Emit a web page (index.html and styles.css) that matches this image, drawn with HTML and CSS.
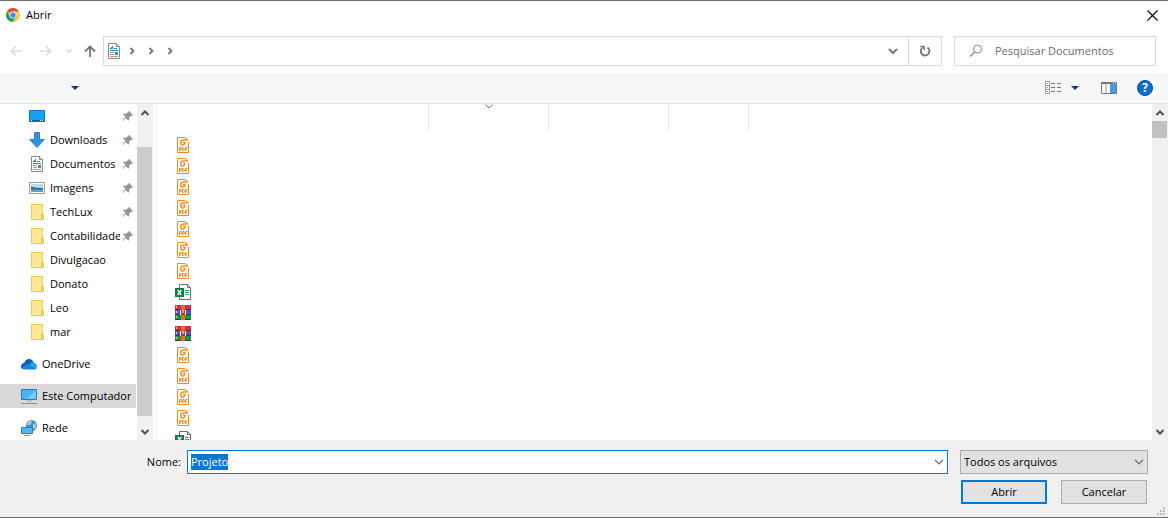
FILE: index.html
```html
<!DOCTYPE html>
<html lang="pt-BR">
<head>
    <meta charset="UTF-8">
    <meta name="viewport" content="width=device-width, initial-scale=1.0">
    <title>Abrir</title>
    <link rel="stylesheet" href="styles.css">
</head>
<body>
    <!-- Shared icons -->
    <svg class="sprite" aria-hidden="true">
        <symbol id="i-doc" viewBox="0 0 16 16">
            <path d="M2.500.5h8l3 3v12h-11z" fill="#fff" stroke="#8a8a8a"/>
            <path d="M10.500.5v3h3" fill="#ddd" stroke="#8a8a8a"/>
            <path d="M4 5.500h3M5 4.500h2M6 3.500h1M8 5.500h3M4 7.500h8" stroke="#1e88d2" fill="none"/>
            <path d="M4 9.500h4M4 11.500h4M4 13.500h8" stroke="#9aa0a5"/>
            <path d="M9 9h3v3H9z" fill="#3c8fc0"/>
        </symbol>
        <symbol id="i-folder" viewBox="0 0 16 16">
            <path d="M2.500.5h11v15h-11z" fill="#ffe794" stroke="#f0cb50"/>
            <path d="M12.500 10.500h2v5h-2z" fill="#ffe08a" stroke="#e8bd45"/>
        </symbol>
        <symbol id="i-pin" viewBox="0 0 12 12">
            <path d="M7 1l4 4-1 1-1-.2-1.800 2 .1 2-1 1-2.600-2.600L1 11l-.5-.5 3-3.400L1 4.700l1-1 2 .1 2.200-1.800L6 1.700z" fill="#8c98a3"/>
        </symbol>
        <symbol id="i-pdf" viewBox="0 0 16 16">
            <path d="M10 .5H2.500v15h11V5" fill="none" stroke="#f58a1f"/>
            <path d="M10.500 0L14 3.500h-3.500z" fill="#f58a1f"/>
            <path d="M10.500 3H8.500C6.500 3 5.700 4.600 5.700 5.800S6.500 8 7.700 8 9.800 7 10 5.500H8" fill="none" stroke="#f58a1f" stroke-width="1.400"/>
            <path d="M4.500 14v-3.500h1.700v2H4.500M7.500 10.500v3h1l.7-.7v-1.600l-.7-.7zM10.500 14v-3.500h2M10.500 12.500h1.500" fill="none" stroke="#f58a1f"/>
        </symbol>
        <symbol id="i-xls" viewBox="0 0 16 16">
            <path d="M4.500.5h8l3 3v12h-11z" fill="#fff" stroke="#6d6d6d"/>
            <path d="M12.500.5v3h3" fill="none" stroke="#6d6d6d"/>
            <path d="M10 6.500h4M10 8.500h4M10 10.500h4" stroke="#21a366"/>
            <path d="M0 4h9v9H0z" fill="#107c41"/>
            <path d="M2.700 6l3.600 5M6.300 6l-3.600 5" stroke="#fff" stroke-width="1.400"/>
        </symbol>
        <symbol id="i-rar" viewBox="0 0 16 16">
            <path d="M0 0h16v5H0z" fill="#d02c58"/>
            <path d="M0 5h16v5H0z" fill="#5a50bd"/>
            <path d="M0 10h16v5H0z" fill="#169447"/>
            <path d="M0 4.500h16M0 9.500h16M0 14.500h16" stroke="#2a2140" stroke-opacity=".7"/>
            <path d="M1.500 1v2M1.500 6v2M1.500 11v2" stroke="#f7d02c"/>
            <path d="M6 0h4v15H6z" fill="#e07020"/>
            <path d="M5 5h6v5H5z" fill="#a83e20"/>
            <path d="M5.500 5v5M10.500 5v5M8 5v3" stroke="#fff" fill="none"/>
        </symbol>
        <symbol id="i-up" viewBox="0 0 10 10">
            <path d="M1.500 7L5 3.500 8.500 7" fill="none" stroke="#505050" stroke-width="2"/>
        </symbol>
        <symbol id="i-down" viewBox="0 0 10 10">
            <path d="M1.500 3L5 6.500 8.500 3" fill="none" stroke="#505050" stroke-width="2"/>
        </symbol>
        <symbol id="i-crumb" viewBox="0 0 6 8">
            <path d="M1.500 1L4.500 4l-3 3" fill="none" stroke="#757575" stroke-width="1.800"/>
        </symbol>
        <symbol id="i-caret" viewBox="0 0 8 4">
            <path d="M0 0h8L4 4z" fill="#17365f"/>
        </symbol>
    </svg>

    <header class="titlebar">
        <svg width="14" height="14" viewBox="0 0 14 14">
            <circle cx="7" cy="7" r="7" fill="#ffcd40"/>
            <path d="M7 7L.9 3.500A7 7 0 0 1 13.100 3.500H7z" fill="#dd5144"/>
            <path d="M7 7L4 8.800.9 3.500A7 7 0 0 0 7 14l3-5.200z" fill="#1da362"/>
            <circle cx="7" cy="7" r="3.400" fill="#f1f1f1"/>
            <circle cx="7" cy="7" r="2.600" fill="#4285f4"/>
        </svg>
        <h1>Abrir</h1>
        <button type="button" class="close" aria-label="Fechar">
            <svg width="11" height="11" viewBox="0 0 11 11"><path d="M.5.5l10 10M10.500.5l-10 10" stroke="#000" stroke-width="1.100"/></svg>
        </button>
    </header>

    <div class="address-row">
        <nav class="history" aria-label="Histórico">
            <button type="button" aria-label="Voltar" disabled><svg width="12" height="12" viewBox="0 0 12 12"><path d="M12 6H1.500M6 1.500L1.500 6 6 10.500" fill="none" stroke="#dcdcdc" stroke-width="1.600"/></svg></button>
            <button type="button" aria-label="Avançar" disabled><svg width="12" height="12" viewBox="0 0 12 12"><path d="M0 6h10.500M6 1.500L10.500 6 6 10.500" fill="none" stroke="#dcdcdc" stroke-width="1.600"/></svg></button>
            <button type="button" class="recent" aria-label="Locais recentes" disabled><svg width="6" height="6" viewBox="0 0 6 6"><path d="M.5 1.500L3 4l2.500-2.500" fill="none" stroke="#d5d5d5" stroke-width="1.500"/></svg></button>
            <button type="button" class="parent" aria-label="Acima"><svg width="12" height="12" viewBox="0 0 12 12"><path d="M6 12V1.500M1 6.500l5-5 5 5" fill="none" stroke="#757575" stroke-width="1.800"/></svg></button>
        </nav>
        <div class="address">
            <svg width="16" height="16"><use href="#i-doc"/></svg>
            <button type="button" class="crumb" aria-label="Pasta 1"><svg width="6" height="8"><use href="#i-crumb"/></svg></button>
            <button type="button" class="crumb" aria-label="Pasta 2"><svg width="6" height="8"><use href="#i-crumb"/></svg></button>
            <button type="button" class="crumb" aria-label="Pasta 3"><svg width="6" height="8"><use href="#i-crumb"/></svg></button>
            <button type="button" class="previous" aria-label="Locais anteriores"><svg width="10" height="10" viewBox="0 0 10 10"><path d="M1 3l4 4 4-4" fill="none" stroke="#757575" stroke-width="2"/></svg></button>
            <button type="button" class="refresh" aria-label="Atualizar">
                <svg width="12" height="12" viewBox="0 0 12 12"><path d="M8.500 2.600A4.300 4.300 0 1 1 3 3.200" fill="none" stroke="#757575" stroke-width="1.800"/><path d="M1.500 1.600h3.500v3.500" fill="none" stroke="#757575" stroke-width="1.600"/></svg>
            </button>
        </div>
        <label class="search">
            <svg width="14" height="14" viewBox="0 0 14 14"><circle cx="8.500" cy="5" r="4" fill="none" stroke="#858585"/><path d="M5.500 8L1 12.500" stroke="#858585" stroke-width="1.200"/></svg>
            <input type="text" placeholder="Pesquisar Documentos" aria-label="Pesquisar Documentos">
        </label>
    </div>

    <div class="toolbar">
        <button type="button" class="organize" aria-label="Organizar"><svg width="8" height="4"><use href="#i-caret"/></svg></button>
        <button type="button" class="view" aria-label="Exibição">
            <svg width="17" height="14" viewBox="0 0 17 14">
                <path d="M.5.5h4v12h-4zM.5 4.500h4M.5 8.500h4" fill="#fff" stroke="#9a9a9a"/>
                <path d="M2 2.500h1M2 6.500h1" stroke="#3b87c8"/><path d="M2 10.500h1" stroke="#d33"/>
                <path d="M6 2.500h4M12 2.500h4M6 6.500h4M12 6.500h4M6 10.500h4M12 10.500h4" stroke="#777"/>
            </svg>
            <svg width="8" height="4"><use href="#i-caret"/></svg>
        </button>
        <button type="button" class="preview" aria-label="Painel de visualização">
            <svg width="16" height="12" viewBox="0 0 16 12"><path d="M.5.5h15v11H.5z" fill="#fff" stroke="#777"/><path d="M0 1h16" stroke="#777" stroke-width="2"/><path d="M5 2v9" stroke="#999"/><path d="M9 2h6v9H9z" fill="#429ce3"/><path d="M12 1h1M14 1h1" stroke="#fff"/></svg>
        </button>
        <button type="button" class="help" aria-label="Ajuda">?</button>
    </div>

    <main class="browser">
        <nav class="sidebar" aria-label="Pastas">
            <ul>
                <li class="sub">
                    <a href="#desktop" aria-label="Área de Trabalho"><svg width="16" height="16" viewBox="0 0 16 16"><path d="M.5 2.500h15v11H.5z" fill="#18a0f5" stroke="#0878c4"/><path d="M1 12.500h14" stroke="#075a9c"/><path d="M2 12.500h1M11 12.500h1M13 12.500h1" stroke="#fff"/></svg><span></span></a>
                    <svg class="pin" width="12" height="12"><use href="#i-pin"/></svg>
                </li>
                <li class="sub">
                    <a href="#downloads"><svg width="16" height="16" viewBox="0 0 16 16"><path d="M5.500.5h5v7h5L8 15.500.5 7.500h5z" fill="#3092e2" stroke="#2b83cc"/></svg><span>Downloads</span></a>
                    <svg class="pin" width="12" height="12"><use href="#i-pin"/></svg>
                </li>
                <li class="sub">
                    <a href="#documentos"><svg width="16" height="16"><use href="#i-doc"/></svg><span>Documentos</span></a>
                    <svg class="pin" width="12" height="12"><use href="#i-pin"/></svg>
                </li>
                <li class="sub">
                    <a href="#imagens"><svg width="16" height="16" viewBox="0 0 16 16"><path d="M.5 2.500h15v11H.5z" fill="#fff" stroke="#999"/><path d="M2 4h12v8H2z" fill="#b9dcf5"/><path d="M2 6.500q5 1.500 12 1.500v2H2z" fill="#386c70"/><path d="M2 9.500h12V12H2z" fill="#5a9fd0"/></svg><span>Imagens</span></a>
                    <svg class="pin" width="12" height="12"><use href="#i-pin"/></svg>
                </li>
                <li class="sub">
                    <a href="#techlux"><svg width="16" height="16"><use href="#i-folder"/></svg><span>TechLux</span></a>
                    <svg class="pin" width="12" height="12"><use href="#i-pin"/></svg>
                </li>
                <li class="sub">
                    <a href="#contabilidade"><svg width="16" height="16"><use href="#i-folder"/></svg><span>Contabilidade</span></a>
                    <svg class="pin" width="12" height="12"><use href="#i-pin"/></svg>
                </li>
                <li class="sub"><a href="#divulgacao"><svg width="16" height="16"><use href="#i-folder"/></svg><span>Divulgacao</span></a></li>
                <li class="sub"><a href="#donato"><svg width="16" height="16"><use href="#i-folder"/></svg><span>Donato</span></a></li>
                <li class="sub"><a href="#leo"><svg width="16" height="16"><use href="#i-folder"/></svg><span>Leo</span></a></li>
                <li class="sub"><a href="#mar"><svg width="16" height="16"><use href="#i-folder"/></svg><span>mar</span></a></li>
                <li class="root">
                    <a href="#onedrive"><svg width="16" height="16" viewBox="0 0 16 16"><path d="M0 10.500C0 8.500 1.500 7 3.200 7 4 4.500 5.700 3 8 3c2.200 0 4 1.500 4.500 3.500L9 9l-7 4C.8 12.700 0 11.800 0 10.500z" fill="#0a5fb4"/><path d="M8 8.500c1.500-2 4-2.500 5.500-1.700C15 7.500 16 9 16 10.500c0 1.700-1.200 3-3 3z" fill="#28a0ea"/><path d="M1 12.500C2.500 9.500 5.500 8 8 8.700l7.300 3.800c-.6.700-1.400 1-2.300 1H3.500c-1 0-1.900-.3-2.500-1z" fill="#1587e0"/></svg><span>OneDrive</span></a>
                </li>
                <li class="root selected">
                    <a href="#computador"><svg width="16" height="16" viewBox="0 0 16 16"><path d="M.5 1.500h15v10H.5z" fill="#47b5f5" stroke="#2d7cac"/><path d="M15 2v9H6z" fill="#79cdfb"/><path d="M5 13h6" stroke="#a4acb2"/><path d="M0 15.500h16" stroke="#8296a6"/></svg><span>Este Computador</span></a>
                </li>
                <li class="root">
                    <a href="#rede"><svg width="16" height="16" viewBox="0 0 16 16"><circle cx="10.500" cy="5.500" r="5.500" fill="#4d8fb0"/><path d="M7 2c2-2 4-1 4 0L9 5H6zM12 4l3-1v5l-3 1z" fill="#a5cfe0"/><path d="M.5 7.500h11v6H.5z" fill="#4bb8f5" stroke="#2d7cac"/><path d="M3 15.500h6" stroke="#8296a6"/></svg><span>Rede</span></a>
                </li>
            </ul>
            <div class="scrollbar">
                <button type="button" aria-label="Rolar pastas para cima"><svg width="10" height="10"><use href="#i-up"/></svg></button>
                <div class="track folders"><div class="thumb"></div></div>
                <button type="button" aria-label="Rolar pastas para baixo"><svg width="10" height="10"><use href="#i-down"/></svg></button>
            </div>
        </nav>

        <section class="files" aria-label="Arquivos">
            <div class="list">
                <table>
                    <thead>
                        <tr>
                            <th class="name"></th>
                            <th class="date"><svg width="8" height="5" viewBox="0 0 8 5"><path d="M.5.5L4 4 7.500.5" fill="none" stroke="#777"/></svg></th>
                            <th class="type"></th>
                            <th class="size"></th>
                            <th></th>
                        </tr>
                    </thead>
                    <tbody>
                        <tr><td colspan="5"><svg width="16" height="16"><use href="#i-pdf"/></svg></td></tr>
                        <tr><td colspan="5"><svg width="16" height="16"><use href="#i-pdf"/></svg></td></tr>
                        <tr><td colspan="5"><svg width="16" height="16"><use href="#i-pdf"/></svg></td></tr>
                        <tr><td colspan="5"><svg width="16" height="16"><use href="#i-pdf"/></svg></td></tr>
                        <tr><td colspan="5"><svg width="16" height="16"><use href="#i-pdf"/></svg></td></tr>
                        <tr><td colspan="5"><svg width="16" height="16"><use href="#i-pdf"/></svg></td></tr>
                        <tr><td colspan="5"><svg width="16" height="16"><use href="#i-pdf"/></svg></td></tr>
                        <tr><td colspan="5"><svg width="16" height="16"><use href="#i-xls"/></svg></td></tr>
                        <tr><td colspan="5"><svg width="16" height="16"><use href="#i-rar"/></svg></td></tr>
                        <tr><td colspan="5"><svg width="16" height="16"><use href="#i-rar"/></svg></td></tr>
                        <tr><td colspan="5"><svg width="16" height="16"><use href="#i-pdf"/></svg></td></tr>
                        <tr><td colspan="5"><svg width="16" height="16"><use href="#i-pdf"/></svg></td></tr>
                        <tr><td colspan="5"><svg width="16" height="16"><use href="#i-pdf"/></svg></td></tr>
                        <tr><td colspan="5"><svg width="16" height="16"><use href="#i-pdf"/></svg></td></tr>
                        <tr><td colspan="5"><svg width="16" height="16"><use href="#i-xls"/></svg></td></tr>
                    </tbody>
                </table>
            </div>
            <div class="scrollbar">
                <button type="button" aria-label="Rolar arquivos para cima"><svg width="10" height="10"><use href="#i-up"/></svg></button>
                <div class="track"><div class="thumb short"></div></div>
                <button type="button" aria-label="Rolar arquivos para baixo"><svg width="10" height="10"><use href="#i-down"/></svg></button>
            </div>
        </section>
    </main>

    <form class="footer" onsubmit="return false">
        <label class="name-label" for="fileName">Nome:</label>
        <div class="combo">
            <input type="text" id="fileName" value="Projeto">
            <button type="button" aria-label="Nomes recentes"><svg width="10" height="6" viewBox="0 0 10 6"><path d="M1 .8l4 4 4-4" fill="none" stroke="#606060" stroke-width="1.200"/></svg></button>
        </div>
        <div class="filter">
            <select aria-label="Tipo de arquivo">
                <option>Todos os arquivos</option>
            </select>
            <svg width="10" height="6" viewBox="0 0 10 6"><path d="M1 .8l4 4 4-4" fill="none" stroke="#606060" stroke-width="1.200"/></svg>
        </div>
        <div class="actions">
            <button type="submit" class="primary">Abrir</button>
            <button type="button">Cancelar</button>
        </div>
        <svg class="grip" width="8" height="8" viewBox="0 0 8 8"><path d="M6 0h2v2H6zM3 3h2v2H3zM6 3h2v2H6zM0 6h2v2H0zM3 6h2v2H3zM6 6h2v2H6z" fill="#bcbcbc"/></svg>
    </form>

    <script>
        const fileName = document.getElementById('fileName');
        fileName.focus();
        fileName.select();
    </script>
</body>
</html>
```
FILE: styles.css
```css
* {
    box-sizing: border-box;
}

body {
    margin: 0;
    height: 100vh;
    display: flex;
    flex-direction: column;
    overflow: hidden;
    border-top: 1px solid #6e6e6e;
    border-bottom: 1px solid #6e6e6e;
    background: #fff;
    color: #000;
    font-family: "Open Sans", "Noto Sans", sans-serif;
    font-size: 11px;
    line-height: 16px;
}

button, input, select {
    font: inherit;
    color: inherit;
}

button {
    display: flex;
    align-items: center;
    justify-content: center;
    padding: 0;
    border: 0;
    background: none;
}

svg {
    display: block;
    flex: none;
}

.sprite {
    position: absolute;
    width: 0;
    height: 0;
}

/* Title bar */
.titlebar {
    display: flex;
    align-items: center;
    gap: 6px;
    height: 28px;
    padding: 0 10px 0 6px;
}

.titlebar h1 {
    margin: 0;
    font-size: 11px;
    font-weight: normal;
}

.close {
    margin-left: auto;
}

/* Address row */
.address-row {
    display: flex;
    align-items: center;
    height: 44px;
    padding-right: 12px;
}

.history {
    display: flex;
    align-items: center;
    gap: 18px;
    width: 103px;
    padding-left: 10px;
}

.history .recent {
    margin-left: -4px;
}

.history .parent {
    margin-left: -6px;
}

.address {
    flex: 1;
    display: flex;
    align-items: center;
    height: 30px;
    padding-left: 2px;
    border: 1px solid #d9d9d9;
}

.crumb {
    width: 19px;
    height: 28px;
}

.previous {
    width: 30px;
    height: 28px;
    margin-left: auto;
}

.refresh {
    width: 33px;
    height: 28px;
    border-left: 1px solid #d9d9d9;
}

.search {
    display: flex;
    align-items: center;
    gap: 12px;
    width: 202px;
    height: 30px;
    margin-left: 12px;
    padding-left: 14px;
    border: 1px solid #d9d9d9;
}

.search input {
    flex: 1;
    min-width: 0;
    padding: 0;
    border: 0;
    outline: 0;
}

.search input::placeholder {
    color: #6d6d6d;
    opacity: 1;
}

/* Toolbar */
.toolbar {
    display: flex;
    align-items: center;
    height: 31px;
    padding: 0 15px 0 71px;
    background: #f5f6f7;
    border-bottom: 1px solid #e5e7ea;
}

.view {
    gap: 9px;
    margin-left: auto;
}

.preview {
    margin: 0 20px 0 22px;
}

.help {
    width: 16px;
    height: 16px;
    border: 1px solid #064b8c;
    border-radius: 50%;
    background: #0a6fd0;
    color: #fff;
    font-size: 12px;
    font-weight: bold;
}

/* Folders and files */
.browser {
    flex: 1;
    display: flex;
    min-height: 0;
}

.sidebar {
    display: flex;
    width: 156px;
    padding-right: 2px;
    border-right: 1px solid #f2f2f2;
}

.sidebar ul {
    flex: 1;
    min-width: 0;
    margin: 0;
    padding: 0;
    list-style: none;
    overflow: hidden;
}

.sidebar li {
    display: flex;
    align-items: center;
    height: 24px;
    padding-right: 3px;
}

.sidebar a {
    flex: 1;
    display: flex;
    align-items: center;
    gap: 5px;
    min-width: 0;
    color: #000;
    text-decoration: none;
}

.sidebar span {
    overflow: hidden;
    white-space: nowrap;
}

.sidebar .sub {
    padding-left: 29px;
}

.sidebar .root {
    margin-top: 8px;
    padding-left: 21px;
    padding-right: 0;
}

.sidebar .selected {
    margin-right: 1px;
    background: #d9d9d9;
}

.pin {
    margin-left: 2px;
}

.scrollbar {
    display: flex;
    flex-direction: column;
    width: 16px;
    background: #f0f0f0;
}

.scrollbar button {
    height: 17px;
}

.track {
    flex: 1;
    padding-right: 1px;
}

.folders {
    display: flex;
    flex-direction: column;
    padding: 26px 1px 7px 0;
}

.thumb {
    flex: 1;
    background: #cdcdcd;
}

.short {
    height: 17px;
    background: #c1c1c1;
}

.files {
    flex: 1;
    display: flex;
    min-width: 0;
}

.list {
    flex: 1;
    overflow: hidden;
}

table {
    width: 100%;
    table-layout: fixed;
    border-spacing: 0;
}

th {
    height: 25px;
    padding: 0;
    vertical-align: top;
    border-right: 1px solid #e2e2e2;
}

th:last-child {
    border-right: 0;
}

th svg {
    margin: 0 auto;
}

.name {
    width: 273px;
}

.date, .type {
    width: 120px;
}

.size {
    width: 80px;
}

tbody::before {
    content: "";
    display: block;
    height: 6px;
}

td {
    height: 21px;
    padding: 2px 0 0 19px;
    vertical-align: top;
}

/* File name and buttons */
.footer {
    position: relative;
    display: grid;
    grid-template-columns: 181px 1fr 188px;
    column-gap: 6px;
    row-gap: 6px;
    align-items: center;
    padding: 10px 20px 13px 0;
    background: #f0f0f0;
}

.name-label {
    text-align: right;
}

.combo {
    display: flex;
    height: 24px;
    margin-right: 6px;
    padding-left: 3px;
    border: 1px solid #0078d7;
    background: #fff;
}

.combo input {
    flex: 1;
    min-width: 0;
    padding: 0;
    border: 0;
    outline: 0;
}

.combo input::selection {
    background: #0078d7;
    color: #fff;
}

.combo button {
    width: 16px;
}

.filter {
    display: grid;
    align-items: center;
}

.filter select, .filter svg {
    grid-area: 1 / 1;
}

.filter select {
    width: 100%;
    height: 24px;
    padding: 0 3px;
    appearance: none;
    border: 1px solid #adadad;
    border-radius: 0;
    background: #e1e1e1;
}

.filter svg {
    justify-self: end;
    margin-right: 4px;
    pointer-events: none;
}

.actions {
    grid-column: 3;
    display: flex;
    justify-content: space-between;
    padding: 0 1px;
}

.actions button {
    width: 86px;
    height: 24px;
    border: 1px solid #adadad;
    background: #e1e1e1;
}

.actions .primary {
    border: 2px solid #0078d7;
}

.grip {
    position: absolute;
    right: 3px;
    bottom: 2px;
}
```
